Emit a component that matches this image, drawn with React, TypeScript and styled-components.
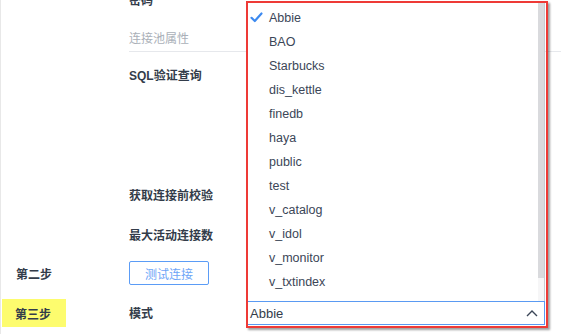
import React from 'react';
import styled, {createGlobalStyle} from "styled-components";

const GlobalStyle = createGlobalStyle`
  html, body {
    margin: 0;
    padding: 0;
    background: #fff;
    overflow: hidden;
  }
`;

const CN = `"Liberation Sans", "Noto Sans CJK SC", sans-serif`;

const Page = styled.div`
  position: relative;
  width: 561px;
  height: 334px;
  overflow: hidden;
  box-sizing: border-box;
  border-left: 1px solid #e8e8e8;
  font-family: ${CN};
  color: #333c4a;
`;

const Form = styled.div`
  display: flex;
  flex-direction: column;
  margin-top: -12px;
  padding-left: 14px;
`;

const Row = styled.div<{ $top?: number; $height?: number; $align?: string }>`
  display: grid;
  grid-template-columns: 114px 117px 1fr;
  grid-template-rows: ${(p) => p.$height || 24}px;
  align-items: ${(p) => p.$align || "center"};
  height: ${(p) => p.$height || 24}px;
  margin-top: ${(p) => p.$top || 0}px;
`;

const StepLabel = styled.div<{ $active?: boolean }>`
  display: flex;
  align-items: center;
  justify-self: start;
  height: 28px;
  margin-left: ${(p) => (p.$active ? "-13px" : "1px")};
  padding: ${(p) => (p.$active ? "1px 15px 0 13px" : "1px 0 0")};
  box-sizing: border-box;
  background: ${(p) => (p.$active ? "#fdfc6e" : "transparent")};
  font-size: 12px;
  font-weight: 600;
  color: #333c4a;
`;

const FieldLabel = styled.div<{ $bold?: boolean }>`
  box-sizing: border-box;
  height: 24px;
  padding-top: 1px;
  font-size: 12px;
  line-height: 24px;
  font-weight: ${(p) => (p.$bold ? 700 : 600)};
  color: #333c4a;
`;

const SectionTitle = styled.div`
  grid-column: 2 / 4;
  box-sizing: border-box;
  height: 26px;
  padding-top: 1px;
  margin-right: -40px;
  border-bottom: 1px solid #e6e8ec;
  font-size: 12px;
  line-height: 24px;
  color: #aab0b8;
`;

const ButtonCell = styled.div`
  display: flex;
  align-items: center;
`;

const OutlineButton = styled.button`
  width: 80px;
  height: 24px;
  padding: 0;
  border: 1px solid #5b9cf6;
  border-radius: 2px;
  background: #fff;
  color: #6ea5f7;
  font-family: ${CN};
  font-size: 12px;
`;

const SelectWrap = styled.div`
  position: relative;
  width: 298px;
  margin-left: 1px;
`;

const SelectBox = styled.div`
  display: flex;
  align-items: center;
  justify-content: space-between;
  box-sizing: border-box;
  height: 24px;
  padding: 0 6px 0 2px;
  border: 1px solid #5a9af2;
  background: #fff;
  font-family: "Liberation Sans", sans-serif;
  font-size: 13px;
  color: #333c4a;
`;

const Popup = styled.div`
  position: absolute;
  left: 0;
  right: 0;
  bottom: 100%;
  height: 299px;
  box-sizing: border-box;
  display: flex;
  background: #fff;
  border: 1px solid #c9ccd2;
  border-bottom: none;
`;

const OptionList = styled.ul`
  flex: 1;
  margin: 0;
  padding: 3px 0 0;
  list-style: none;
`;

const Option = styled.li`
  position: relative;
  height: 24px;
  padding-left: 21px;
  line-height: 24px;
  font-family: "Liberation Sans", sans-serif;
  font-size: 12.5px;
  color: #3b4657;

  svg {
    position: absolute;
    left: 2px;
    top: 6px;
  }
`;

const ScrollTrack = styled.div`
  width: 6px;
  background: #f6f6f7;
`;

const ScrollThumb = styled.div`
  height: 275px;
  background: #d9dadd;
`;

const Annotation = styled.div`
  position: absolute;
  left: -1px;
  right: -3px;
  top: -300px;
  bottom: -3px;
  border: 2px solid #ee3a36;
  box-shadow: 2px 2px 2px rgba(0, 0, 0, 0.38);
  pointer-events: none;
`;

const schemas = ["Abbie", "BAO", "Starbucks", "dis_kettle", "finedb", "haya", "public", "test", "v_catalog", "v_idol", "v_monitor", "v_txtindex"];

const Check = () => (
    <svg width="13" height="11" viewBox="0 0 13 11">
        <path d="M1.5 5.8 L4.8 9 L11.5 1.5" fill="none" stroke="#3d8af0" strokeWidth="2.2" strokeLinecap="round" strokeLinejoin="round"/>
    </svg>
);

const ChevronUp = () => (
    <svg width="12" height="8" viewBox="0 0 12 8">
        <path d="M1 7 L6 2 L11 7" fill="none" stroke="#3b4657" strokeWidth="1.4"/>
    </svg>
);

const App = () => {
    const selected = "Abbie";

    return <>
        <GlobalStyle/>
        <Page>
            <Form>
                <Row>
                    <span/>
                    <FieldLabel>密码</FieldLabel>
                </Row>
                <Row $top={14} $height={25} $align="start">
                    <span/>
                    <SectionTitle>连接池属性</SectionTitle>
                </Row>
                <Row $top={12} $height={104} $align="start">
                    <span/>
                    <FieldLabel $bold>SQL验证查询</FieldLabel>
                </Row>
                <Row $top={16}>
                    <span/>
                    <FieldLabel>获取连接前校验</FieldLabel>
                </Row>
                <Row $top={16}>
                    <span/>
                    <FieldLabel>最大活动连接数</FieldLabel>
                </Row>
                <Row $top={14}>
                    <StepLabel>第二步</StepLabel>
                    <ButtonCell><OutlineButton>测试连接</OutlineButton></ButtonCell>
                </Row>
                <Row $top={16}>
                    <StepLabel $active>第三步</StepLabel>
                    <FieldLabel>模式</FieldLabel>
                    <SelectWrap>
                        <Popup>
                            <OptionList>
                                {schemas.map((s) => (
                                    <Option key={s}>
                                        {s === selected && <Check/>}
                                        {s}
                                    </Option>
                                ))}
                            </OptionList>
                            <ScrollTrack>
                                <ScrollThumb/>
                            </ScrollTrack>
                        </Popup>
                        <SelectBox>
                            <span>{selected}</span>
                            <ChevronUp/>
                        </SelectBox>
                        <Annotation/>
                    </SelectWrap>
                </Row>
            </Form>
        </Page>
    </>;
};

export default App;
